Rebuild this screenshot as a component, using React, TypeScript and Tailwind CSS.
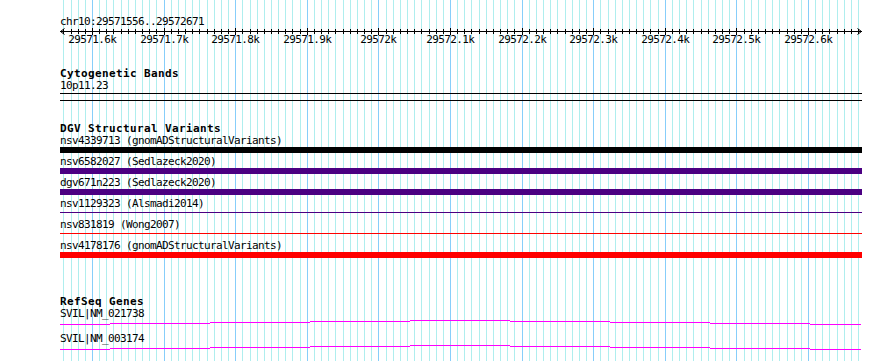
import React from "react";

const X0 = 92;
const BP0 = 29571600;
const PX = 0.716;
const xOf = (bp: number) => Math.round(X0 + (bp - BP0) * PX);

const gridBps: number[] = [];
for (let bp = 29571560; bp <= 29572670; bp += 10) gridBps.push(bp);

const majorLabels = [
  [29571600, "29571.6k"],
  [29571700, "29571.7k"],
  [29571800, "29571.8k"],
  [29571900, "29571.9k"],
  [29572000, "29572k"],
  [29572100, "29572.1k"],
  [29572200, "29572.2k"],
  [29572300, "29572.3k"],
  [29572400, "29572.4k"],
  [29572500, "29572.5k"],
  [29572600, "29572.6k"],
] as const;

const Grid = () => (
  <svg
    className="absolute left-0 top-0"
    width={890}
    height={361}
    shapeRendering="crispEdges"
  >
    {gridBps.map((bp) => (
      <rect
        key={bp}
        x={xOf(bp)}
        y={0}
        width={1}
        height={361}
        fill={bp % 100 === 0 ? "#87CEFA" : "#AFEEEE"}
      />
    ))}
  </svg>
);

const Ruler = () => (
  <svg width={802} height={20} shapeRendering="crispEdges" className="block">
    <rect x={0} y={4} width={802} height={1} fill="#000" />
    {gridBps.map((bp) => {
      const major = bp % 100 === 0;
      return (
        <rect
          key={bp}
          x={xOf(bp) - 60}
          y={major ? 1 : 2}
          width={1}
          height={major ? 7 : 5}
          fill="#000"
        />
      );
    })}
    <path d="M4.5 1.5 L0.5 4.5 L4.5 7.5" stroke="#000" fill="none" shapeRendering="auto" />
    <path d="M797.5 1.5 L801.5 4.5 L797.5 7.5" stroke="#000" fill="none" shapeRendering="auto" />
    {majorLabels.map(([bp, label]) => (
      <text
        key={bp}
        x={xOf(bp) - 60 + 0.3}
        y={16}
        textAnchor="middle"
        fontFamily="'DejaVu Sans Mono', monospace"
        fontSize={11}
        letterSpacing={-0.62}
        fill="#000"
      >
        {label}
      </text>
    ))}
  </svg>
);

const segs: [number, number, number][] = [
  [60, 110, 5],
  [110, 210, 4],
  [210, 310, 3],
  [310, 410, 2],
  [410, 510, 1],
  [510, 610, 2],
  [610, 710, 3],
  [710, 810, 4],
  [810, 861, 5],
];

const GeneLine = () => (
  <svg width={802} height={6} shapeRendering="crispEdges" className="block">
    {segs.map(([a, b, y]) => (
      <rect key={a} x={a - 60} y={y} width={b - a} height={1} fill="#FF00FF" />
    ))}
  </svg>
);

const Label = ({ children }: { children: React.ReactNode }) => (
  <div className="h-[11px] leading-[11px] text-[11px] tracking-[-0.62px] whitespace-nowrap text-black">
    {children}
  </div>
);

const Title = ({ children, className }: { children: React.ReactNode; className: string }) => (
  <div
    className={`h-[12px] leading-[11px] text-[11px] font-bold tracking-[0.38px] whitespace-nowrap text-black ${className}`}
  >
    {children}
  </div>
);

type Variant = { label: string; kind: "bar" | "line"; color: string };

const variants: Variant[] = [
  { label: "nsv4339713 (gnomADStructuralVariants)", kind: "bar", color: "bg-[#000000]" },
  { label: "nsv6582027 (Sedlazeck2020)", kind: "bar", color: "bg-[#4B0082]" },
  { label: "dgv671n223 (Sedlazeck2020)", kind: "bar", color: "bg-[#4B0082]" },
  { label: "nsv1129323 (Alsmadi2014)", kind: "line", color: "bg-[#4B0082]" },
  { label: "nsv831819 (Wong2007)", kind: "line", color: "bg-[#FF0000]" },
  { label: "nsv4178176 (gnomADStructuralVariants)", kind: "bar", color: "bg-[#FF0000]" },
];

export default function App() {
  return (
    <div className="relative w-[890px] h-[361px] overflow-hidden bg-white font-['DejaVu_Sans_Mono',monospace]">
      <Grid />
      <div className="relative flex flex-col pl-[60px] pt-[16px]">
        <Label>chr10:29571556..29572671</Label>
        <Ruler />

        <Title className="mt-[21px]">Cytogenetic Bands</Title>
        <Label>10p11.23</Label>
        <div className="mt-[2px] h-[8px] w-[802px] border-y border-black" />

        <Title className="mt-[22px]">DGV Structural Variants</Title>
        {variants.map((v) => (
          <div key={v.label} className="flex flex-col pb-[3px]">
            <Label>{v.label}</Label>
            <div className="mt-[1px] h-[6px] w-[802px] flex flex-col">
              {v.kind === "bar" ? (
                <div className={`h-[6px] w-[802px] ${v.color}`} />
              ) : (
                <div className={`mt-[2px] h-[1px] w-[802px] ${v.color}`} />
              )}
            </div>
          </div>
        ))}

        <Title className="mt-[35px]">RefSeq Genes</Title>
        {["SVIL|NM_021738", "SVIL|NM_003174"].map((g) => (
          <div key={g} className="flex flex-col pb-[8px]">
            <Label>{g}</Label>
            <GeneLine />
          </div>
        ))}
      </div>
    </div>
  );
}
